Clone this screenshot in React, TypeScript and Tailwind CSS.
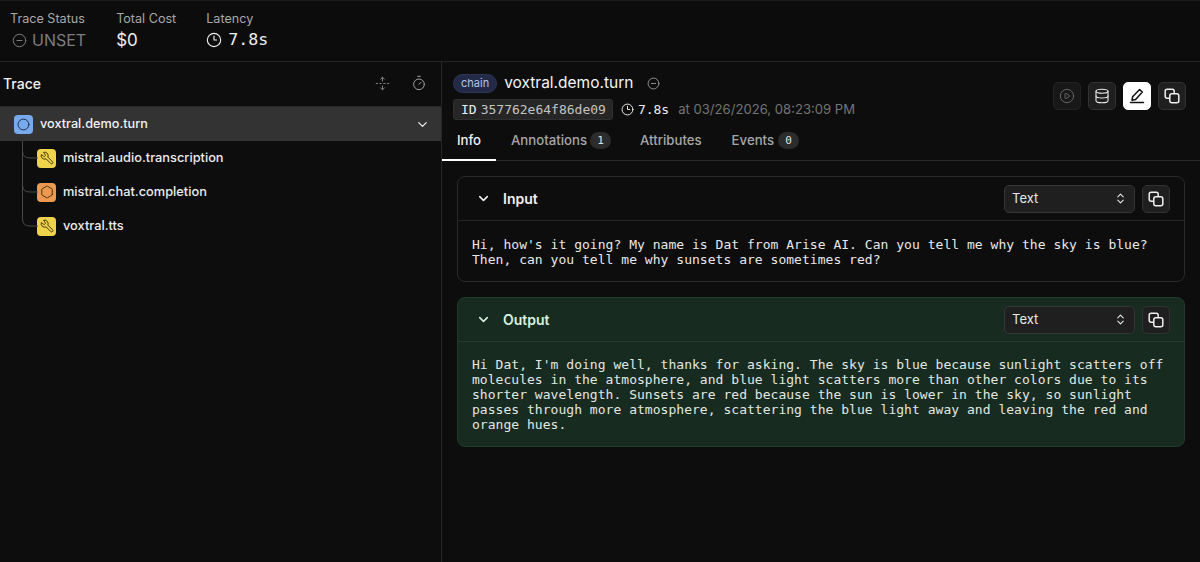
import { ChevronDown, ChevronsUpDown, Circle, CircleMinus, CirclePlay, Clock3, Database, Hexagon, Timer, UnfoldVertical, Wrench } from "lucide-react";

const mono = "font-['DejaVu_Sans_Mono','Liberation_Mono',monospace]";

const spans = [
  { name: "mistral.audio.transcription", kind: "tool" },
  { name: "mistral.chat.completion", kind: "llm" },
  { name: "voxtral.tts", kind: "tool" },
];

function CopyIcon() {
  return (
    <svg width="16" height="16" viewBox="0 0 16 16" fill="none" stroke="currentColor" strokeWidth="1.5">
      <rect x="1.2" y="1.2" width="9" height="9" rx="2" />
      <rect x="5.8" y="5.8" width="9" height="9" rx="2" className="fill-[#1f1f1f]" />
    </svg>
  );
}

function EditIcon() {
  return (
    <svg width="16" height="16" viewBox="0 0 16 16" fill="none" stroke="currentColor" strokeWidth="1.5" strokeLinejoin="round">
      <path d="M10.6 1.6l2.8 2.4-6.8 7.4-3.6.8.6-3.4z" />
      <path d="M1.5 14.6h13" strokeLinecap="round" />
    </svg>
  );
}

function IconButton({ children, className = "" }: { children: React.ReactNode; className?: string }) {
  return (
    <div className={`w-[28px] h-[28px] rounded-[5px] border flex items-center justify-center ${className || "bg-[#1f1f1f] border-[#333333] text-[#f0f0f0]"}`}>
      {children}
    </div>
  );
}

function Card({ title, green, children }: { title: string; green?: boolean; children: React.ReactNode }) {
  return (
    <section className={`rounded-[8px] border ${green ? "bg-[#182b20] border-[#22392b]" : "bg-[#0d0d0d] border-[#2a2a2a]"}`}>
      <div className={`h-[44px] flex items-center pl-[18px] pr-[14px] border-b ${green ? "border-[#25392d] text-[#d8f0df]" : "border-[#262626] text-[#f0f0f0]"}`}>
        <ChevronDown size={15} strokeWidth={2.5} />
        <span className="ml-[12px] text-[14px] font-semibold">{title}</span>
        <div className="ml-auto flex items-center gap-[7px]">
          <div className="w-[131px] h-[28px] rounded-[5px] bg-[#1f1f1f] border border-[#363636] flex items-center justify-between pl-[7px] pr-[7px] text-[13px] text-[#e8e8e8]">
            Text
            <ChevronsUpDown size={13} />
          </div>
          <IconButton><CopyIcon /></IconButton>
        </div>
      </div>
      <div className={`px-[14px] ${green ? "pt-[15px] pb-[14px] text-[#e0e8e2]" : "pt-[16px] pb-[14px] text-[#e8e8e8]"} ${mono} text-[13px] leading-[15px] tracking-[0.03px] whitespace-pre`}>
        {children}
      </div>
    </section>
  );
}

export default function App() {
  return (
    <main className="w-[1200px] h-[562px] overflow-hidden bg-[#0d0d0d] font-['Inter',sans-serif] text-[#f0f0f0] flex flex-col">
      <header className="h-[62px] shrink-0 border-b border-t border-[#262626] border-t-[#1c1c1c] flex gap-[30px] pl-[10px] pt-[10px] bg-[#0c0c0c]">
        <div>
          <div className="text-[12.6px] leading-[15px] text-[#a8a8a8]">Trace Status</div>
          <div className="mt-[3px] flex items-center gap-[5px] text-[#7d7d7d] text-[16px] leading-[22px]">
            <CircleMinus size={15} strokeWidth={1.6} className="ml-[2px]" /> UNSET
          </div>
        </div>
        <div>
          <div className="text-[12.6px] leading-[15px] text-[#a8a8a8]">Total Cost</div>
          <div className="mt-[3px] text-[17px] leading-[22px] text-[#eeeeee]">$0</div>
        </div>
        <div>
          <div className="text-[12.6px] leading-[15px] text-[#a8a8a8]">Latency</div>
          <div className="mt-[3px] flex items-center gap-[6px] text-[16px] leading-[22px] text-[#eeeeee]">
            <Clock3 size={16} strokeWidth={1.7} />
            <span className={`${mono} text-[16.6px]`}>7.8s</span>
          </div>
        </div>
      </header>

      <div className="flex flex-1 min-h-0">
        <aside className="w-[442px] shrink-0 border-r border-[#262626]">
          <div className="h-[45px] flex items-center pl-[3px] pr-[14px] pb-[2px] border-b border-[#262626]">
            <span className="text-[14px] font-medium">Trace</span>
            <UnfoldVertical size={15} strokeWidth={1.5} className="ml-auto text-[#8a8a8a]" />
            <Timer size={16} strokeWidth={1.5} className="ml-[21px] text-[#a0a0a0]" />
          </div>
          <div className="h-[34px] bg-[#333333] flex items-center pl-[14px] pr-[11px]">
            <div className="w-[19px] h-[19px] rounded-[4px] bg-[#78a9ec] flex items-center justify-center text-[#13233a]">
              <Circle size={13} strokeWidth={1.7} />
            </div>
            <span className="ml-[7px] text-[12.7px] font-medium text-[#f2f2f2]">voxtral.demo.turn</span>
            <ChevronDown size={15} strokeWidth={2} className="ml-auto" />
          </div>
          <ul className="relative">
            {spans.map((span, i) => (
              <li key={span.name} className="relative h-[34px] flex items-center pl-[37px]">
                <svg className="absolute left-[22px] top-0" width="16" height="34" fill="none" stroke="#4a4a4a" strokeWidth="1">
                  <path d={i === spans.length - 1 ? "M0.5 0V10Q0.5 17 8 17H16" : "M0.5 0V34M0.5 10Q0.5 17 8 17H16"} />
                </svg>
                <div className={`w-[19px] h-[19px] rounded-[4px] flex items-center justify-center text-[#3a2c08] ${span.kind === "tool" ? "bg-[#efd34c]" : "bg-[#ed9a50]"}`}>
                  {span.kind === "tool" ? <Wrench size={14} strokeWidth={1.6} className="-scale-x-100" /> : <Hexagon size={14} strokeWidth={1.6} />}
                </div>
                <span className="ml-[7px] text-[12.8px] font-medium text-[#ececec]">{span.name}</span>
              </li>
            ))}
          </ul>
        </aside>

        <div className="flex-1 min-w-0">
          <div className="relative pl-[11px] pt-[11px] pr-[14px]">
            <div className="flex items-center">
              <span className="h-[19px] rounded-full bg-[#232a47] border border-[#2e3658] px-[7px] text-[11px] leading-[16px] text-[#b6c4ee]">chain</span>
              <span className="ml-[7px] text-[15.5px] leading-[20px] font-normal text-[#f4f4f4]">voxtral.demo.turn</span>
              <CircleMinus size={13} strokeWidth={1.5} className="ml-[14px] text-[#a8a8a8]" />
            </div>
            <div className="mt-[6px] flex items-center text-[13px]">
              <span className={`h-[21px] rounded-[3px] bg-[#262626] border border-[#303030] pl-[7px] pr-[6px] ${mono} leading-[19px] text-[#c4c4c4] flex`}>
                <span className="text-[#eeeeee] mr-[4px]">ID</span>357762e64f86de09
              </span>
              <Clock3 size={13} strokeWidth={1.8} className="ml-[8px] text-[#eeeeee]" />
              <span className={`ml-[4px] ${mono} text-[#eeeeee]`}>7.8s</span>
              <span className="ml-[9px] text-[13.1px] text-[#747474]">at 03/26/2026, 08:23:09 PM</span>
            </div>
            <div className="absolute right-[14px] top-[20px] flex gap-[7px]">
              <IconButton className="bg-[#181818] border-[#222222] text-[#666666]"><CirclePlay size={16} strokeWidth={1.5} /></IconButton>
              <IconButton><Database size={16} strokeWidth={1.6} /></IconButton>
              <IconButton className="bg-white border-white text-[#111111]"><EditIcon /></IconButton>
              <IconButton><CopyIcon /></IconButton>
            </div>
          </div>
          <nav className="mt-[4px] h-[37px] border-b border-[#2a2a2a] flex items-start text-[13.2px] font-medium text-[#a6a6a6]">
            <div className="relative h-[33px] w-[54px] flex items-center justify-center text-[#f0f0f0]">
              Info
              <span className="absolute left-0 right-0 -bottom-[4px] h-[2px] bg-white" />
            </div>
            <div className="ml-[15px] h-[33px] flex items-center gap-[3px]">
              Annotations
              <span className={`w-[21px] h-[17px] rounded-full bg-[#2c2c2c] text-[#e2e2e2] text-center ${mono} text-[11px] leading-[17px]`}>1</span>
            </div>
            <div className="ml-[29px] h-[33px] flex items-center">Attributes</div>
            <div className="ml-[30px] h-[33px] flex items-center gap-[4px]">
              Events
              <span className={`w-[21px] h-[17px] rounded-full bg-[#2c2c2c] text-[#e2e2e2] text-center ${mono} text-[11px] leading-[17px]`}>0</span>
            </div>
          </nav>
          <div className="px-[15px] pt-[15px] flex flex-col gap-[15px]">
            <Card title="Input">
              {"Hi, how's it going? My name is Dat from Arise AI. Can you tell me why the sky is blue?\nThen, can you tell me why sunsets are sometimes red?"}
            </Card>
            <Card title="Output" green>
              {"Hi Dat, I'm doing well, thanks for asking. The sky is blue because sunlight scatters off\nmolecules in the atmosphere, and blue light scatters more than other colors due to its\nshorter wavelength. Sunsets are red because the sun is lower in the sky, so sunlight\npasses through more atmosphere, scattering the blue light away and leaving the red and\norange hues."}
            </Card>
          </div>
        </div>
      </div>
    </main>
  );
}
